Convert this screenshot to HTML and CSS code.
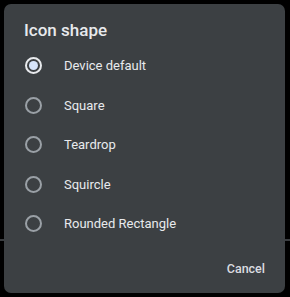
FILE: index.html
```html
<!DOCTYPE html>
<html>
<head>
<meta charset="utf-8">
<link rel="stylesheet" href="styles.css">
</head>
<body>
<div class="dialog">
  <div class="title">Icon shape</div>
  <div class="list">
    <div class="row"><span class="radio checked"></span><span class="label">Device default</span></div>
    <div class="row"><span class="radio"></span><span class="label">Square</span></div>
    <div class="row"><span class="radio"></span><span class="label">Teardrop</span></div>
    <div class="row"><span class="radio"></span><span class="label">Squircle</span></div>
    <div class="row"><span class="radio"></span><span class="label">Rounded Rectangle</span></div>
  </div>
  <div class="actions"><span class="btn">Cancel</span></div>
</div>
</body>
</html>
```
FILE: styles.css
```css
html, body {
  margin: 0;
  padding: 0;
}
body {
  width: 290px;
  height: 297px;
  overflow: hidden;
  background: #000 linear-gradient(to bottom, transparent 239px, #3a3d40 239px, #3a3d40 241px, transparent 241px);
  font-family: Roboto, "Noto Sans", sans-serif;
  color: #e8eaed;
}
.dialog {
  margin: 4px 0 0 4px;
  width: 281px;
  height: 289px;
  background: #3c4043;
  border-radius: 7px;
  box-sizing: border-box;
  display: flex;
  flex-direction: column;
}
.title {
  padding: 15px 0 0 20px;
  font-size: 17px;
  font-weight: 500;
  line-height: 22px;
  color: #e8eaed;
}
.list {
  margin-top: 5px;
  display: flex;
  flex-direction: column;
}
.row {
  height: 39.5px;
  display: flex;
  align-items: center;
  padding-left: 21px;
}
.radio {
  width: 17px;
  height: 17px;
  box-sizing: border-box;
  border: 2px solid #9aa0a6;
  border-radius: 50%;
  display: flex;
  align-items: center;
  justify-content: center;
  flex: none;
}
.radio.checked {
  border-color: #e8eaed;
}
.radio.checked::after {
  content: "";
  width: 9px;
  height: 9px;
  border-radius: 50%;
  background: #d7e5fb;
}
.label {
  margin-left: 22px;
  font-size: 13px;
  color: #e8eaed;
}
.actions {
  margin-top: auto;
  display: flex;
  justify-content: flex-end;
  padding: 0 20px 16px 0;
}
.btn {
  font-size: 12.5px;
  font-weight: 500;
  color: #dadce0;
  line-height: 16px;
}
```
